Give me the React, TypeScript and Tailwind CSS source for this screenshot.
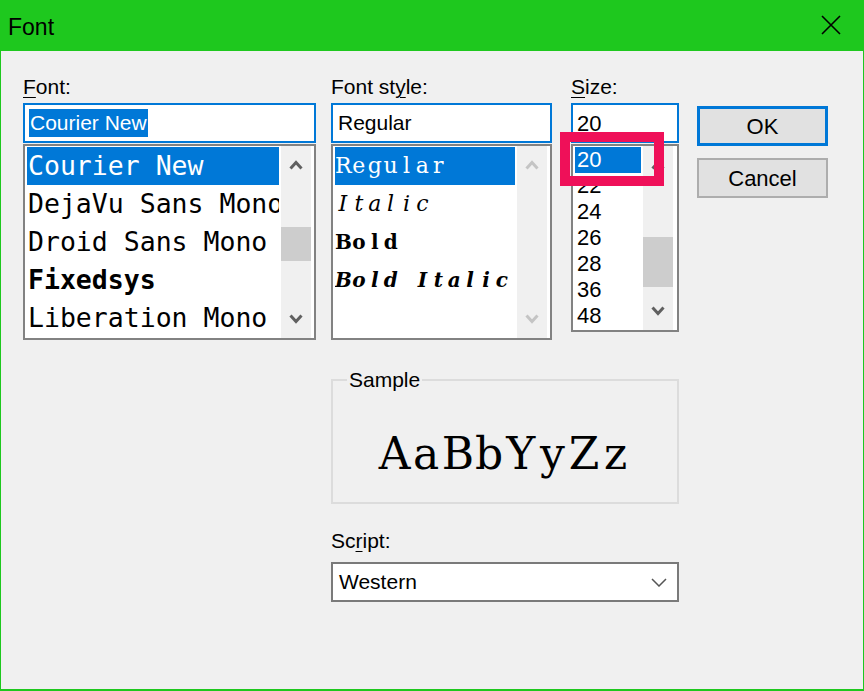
import React from "react";

const ui = "font-['Liberation_Sans',Arial,sans-serif]";
const serif = "font-['DejaVu_Serif',serif]";

// Courier-like text: serif glyphs set in fixed-width cells
const Mono = ({ text, cell }: { text: string; cell: string }) => (
  <>
    {text.split("").map((c, i) => (
      <span key={i} className={`inline-block text-center ${cell}`}>
        {c === " " ? "\u00a0" : c}
      </span>
    ))}
  </>
);

const Arrow = ({ up = false, disabled = false }: { up?: boolean; disabled?: boolean }) => (
  <svg width="14" height="10" viewBox="0 0 14 10" className={disabled ? "text-[#c4c4c4]" : "text-[#606060]"}>
    <path
      d={up ? "M1.5 8.5 L7 2.5 L12.5 8.5" : "M1.5 1.5 L7 7.5 L12.5 1.5"}
      fill="none"
      stroke="currentColor"
      strokeWidth="3"
    />
  </svg>
);

const ScrollBar = ({ thumb, disabled }: { thumb?: string; disabled?: boolean }) => (
  <div className="ml-[2px] flex w-[30px] flex-col bg-[#f0f0f0]">
    <div className="flex h-[38px] items-center justify-center">
      <Arrow up disabled={disabled} />
    </div>
    <div className="flex-1">{thumb && <div className={`bg-[#cdcdcd] ${thumb}`} />}</div>
    <div className="flex h-[38px] items-center justify-center">
      <Arrow disabled={disabled} />
    </div>
  </div>
);

const Label = ({ pre, u, post }: { pre?: string; u: string; post: string }) => (
  <div className="h-[24px] text-[21px] leading-[24px] text-black">
    {pre}
    <span className="underline decoration-1 underline-offset-[3px]">{u}</span>
    {post}
  </div>
);

const fonts = [
  { name: "Courier New", cls: "" },
  { name: "DejaVu Sans Mono", cls: "" },
  { name: "Droid Sans Mono", cls: "" },
  { name: "Fixedsys", cls: "font-bold" },
  { name: "Liberation Mono", cls: "" },
];

const styles = [
  { name: "Regular", cls: "text-[22px]" },
  { name: "Italic", cls: "text-[22px] italic" },
  { name: "Bold", cls: "text-[20px] font-bold" },
  { name: "Bold Italic", cls: "text-[20px] font-bold italic" },
];

const sizes = ["20", "22", "24", "26", "28", "36", "48"];

export default function App() {
  return (
    <div className={`flex h-[691px] w-[864px] flex-col bg-[#1ec81e] pb-[2px] pl-[1px] pr-[1px] ${ui}`}>
      <div className="flex h-[51px] items-center justify-between pl-[7px] pr-[22px] pt-[3px]">
        <span className="text-[23px] text-black">Font</span>
        <svg width="20" height="20" viewBox="0 0 20 20" className="-mt-[4px]">
          <path d="M1 1 L19 19 M19 1 L1 19" stroke="#000" strokeWidth="1.6" />
        </svg>
      </div>

      <div className="flex flex-1 bg-[#f0f0f0] pl-[22px] pt-[24px]">
        {/* font column */}
        <div className="flex w-[293px] flex-col">
          <Label u="F" post="ont:" />
          <div className="mt-[4px] flex h-[40px] items-center border-2 border-[#0078d7] bg-white pl-[4px]">
            <span className="bg-[#0078d7] px-[1px] text-[21px] leading-[28px] text-white">Courier New</span>
          </div>
          <div className="mt-[1px] flex h-[196px] border-2 border-[#828282] bg-white px-[2px]">
            <div className="w-[252px] overflow-hidden pt-[1px] font-['DejaVu_Sans_Mono',monospace] text-[26.5px]">
              {fonts.map((f, i) => (
                <div
                  key={f.name}
                  className={`h-[38px] whitespace-nowrap pl-[1px] leading-[38px] ${f.cls} ${
                    i === 0 ? "bg-[#0078d7] text-white" : "text-black"
                  }`}
                >
                  {f.name}
                </div>
              ))}
            </div>
            <ScrollBar thumb="mt-[43px] h-[34px]" />
          </div>
        </div>

        {/* style, size, sample, script */}
        <div className="ml-[15px] flex w-[348px] flex-col">
          <div className="flex">
            <div className="flex w-[221px] flex-col">
              <Label pre="Font st" u="y" post="le:" />
              <div className="mt-[4px] flex h-[40px] items-center border-2 border-[#0078d7] bg-white pl-[5px] text-[21px] text-black">
                Regular
              </div>
              <div className="mt-[1px] flex h-[196px] border-2 border-[#828282] bg-white px-[2px]">
                <div className={`w-[180px] overflow-hidden pt-[1px] ${serif}`}>
                  {styles.map((s, i) => (
                    <div
                      key={s.name}
                      className={`h-[38px] whitespace-nowrap leading-[38px] ${s.cls} ${
                        i === 0 ? "bg-[#0078d7] text-white" : "text-black"
                      }`}
                    >
                      <Mono text={s.name} cell="w-[15.9px]" />
                    </div>
                  ))}
                </div>
                <ScrollBar disabled />
              </div>
            </div>

            <div className="relative ml-[19px] flex w-[108px] flex-col">
              <Label u="S" post="ize:" />
              <div className="mt-[4px] flex h-[40px] items-center border-2 border-[#0078d7] bg-white pl-[4px] text-[22px] text-black">
                20
              </div>
              <div className="mt-[1px] flex h-[188px] border-2 border-[#828282] bg-white px-[2px]">
                <div className="w-[66px] overflow-hidden pt-[1px] text-[22px]">
                  {sizes.map((s, i) => (
                    <div
                      key={s}
                      className={`h-[26px] pl-[2px] leading-[26px] ${i === 0 ? "bg-[#0078d7] text-white" : "text-black"}`}
                    >
                      {s}
                    </div>
                  ))}
                </div>
                <ScrollBar thumb="mt-[53px] h-[50px]" />
              </div>
              {/* annotation box */}
              <div className="absolute left-[-11px] top-[57px] h-[54px] w-[104px] border-[10px] border-[#ef1059]" />
            </div>
          </div>

          <fieldset className="mt-[28px] h-[136px] border-2 border-[#dcdcdc]">
            <legend className="ml-[14px] px-[2px] text-[21px] leading-[24px] text-black">Sample</legend>
            <div className={`flex h-[110px] items-center justify-center pt-[13px] text-[44px] text-black ${serif}`}>
              <span className="whitespace-nowrap">
                <Mono text="AaBbYyZz" cell="w-[31.6px]" />
              </span>
            </div>
          </fieldset>

          <div className="mt-[25px]">
            <Label pre="Sc" u="r" post="ipt:" />
          </div>
          <div className="mt-[9px] flex h-[40px] items-center justify-between border-2 border-[#7a7a7a] bg-white pl-[6px] pr-[10px] text-[21px] text-black">
            <span>Western</span>
            <svg width="16" height="9" viewBox="0 0 16 9">
              <path d="M1 1 L8 8 L15 1" fill="none" stroke="#555" strokeWidth="1.5" />
            </svg>
          </div>
        </div>

        {/* buttons */}
        <div className="ml-[18px] flex w-[131px] flex-col gap-[12px] pt-[31px]">
          <button className="h-[40px] border-[3px] border-[#0078d7] bg-[#e1e1e1] text-[22px] text-black">OK</button>
          <button className="h-[40px] border-2 border-[#adadad] bg-[#e1e1e1] text-[22px] text-black">Cancel</button>
        </div>
      </div>
    </div>
  );
}
